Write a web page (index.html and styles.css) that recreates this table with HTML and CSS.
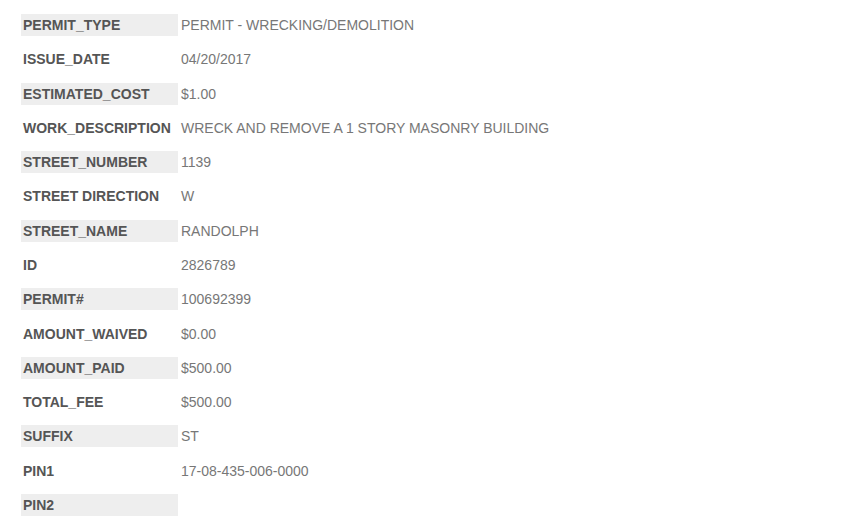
FILE: index.html
```html
<!DOCTYPE html>
<html>
<head>
<meta charset="utf-8">
<link rel="stylesheet" href="styles.css">
</head>
<body>
<div class="props">
  <div class="k shade">PERMIT_TYPE</div><div class="v">PERMIT - WRECKING/DEMOLITION</div>
  <div class="k">ISSUE_DATE</div><div class="v">04/20/2017</div>
  <div class="k shade">ESTIMATED_COST</div><div class="v">$1.00</div>
  <div class="k">WORK_DESCRIPTION</div><div class="v">WRECK AND REMOVE A 1 STORY MASONRY BUILDING</div>
  <div class="k shade">STREET_NUMBER</div><div class="v">1139</div>
  <div class="k">STREET DIRECTION</div><div class="v">W</div>
  <div class="k shade">STREET_NAME</div><div class="v">RANDOLPH</div>
  <div class="k">ID</div><div class="v">2826789</div>
  <div class="k shade">PERMIT#</div><div class="v">100692399</div>
  <div class="k">AMOUNT_WAIVED</div><div class="v">$0.00</div>
  <div class="k shade">AMOUNT_PAID</div><div class="v">$500.00</div>
  <div class="k">TOTAL_FEE</div><div class="v">$500.00</div>
  <div class="k shade">SUFFIX</div><div class="v">ST</div>
  <div class="k">PIN1</div><div class="v">17-08-435-006-0000</div>
  <div class="k shade">PIN2</div><div class="v"></div>
</div>
</body>
</html>
```
FILE: styles.css
```css
html, body {
  margin: 0;
  padding: 0;
  background: #fff;
}
body {
  font-family: "Liberation Sans", Arial, sans-serif;
  font-size: 14px;
}
.props {
  display: grid;
  grid-template-columns: 157px auto;
  grid-auto-rows: 22px;
  row-gap: 12.286px;
  padding: 14px 0 0 21px;
  line-height: 22px;
}
.k {
  font-weight: bold;
  color: #555;
  padding-left: 2px;
  white-space: nowrap;
}
.shade {
  background: #eee;
}
.v {
  color: #777;
  padding-left: 3px;
  white-space: nowrap;
}
```
